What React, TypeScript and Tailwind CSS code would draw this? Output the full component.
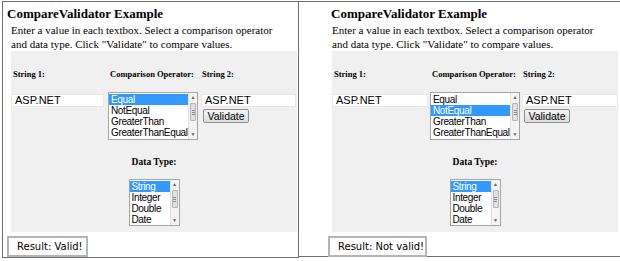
import React from "react";

const serif = { fontFamily: '"Liberation Serif", "Times New Roman", serif' };

function Scrollbar() {
  return (
    <div className="flex w-[9px] shrink-0 flex-col border-l border-[#e3e3e3] bg-[#f4f4f4]">
      <div className="flex h-[9px] items-center justify-center text-[5px] leading-none text-[#606060]">▲</div>
      <div className="mx-[1px] mt-[1px] flex h-[18px] flex-col items-center justify-center gap-[1px] rounded-[1px] border border-[#b5b5b5] bg-[#e0e0e0]">
        <div className="h-px w-[3px] bg-[#8a8a8a]" />
        <div className="h-px w-[3px] bg-[#8a8a8a]" />
        <div className="h-px w-[3px] bg-[#8a8a8a]" />
      </div>
      <div className="flex-1" />
      <div className="flex h-[9px] items-center justify-center text-[5px] leading-none text-[#606060]">▼</div>
    </div>
  );
}

function ListBox({ items, selected, w, h }: { items: string[]; selected: number; w: number; h: number }) {
  return (
    <div
      className="flex shrink-0 overflow-hidden border border-[#a5a5a5] bg-white"
      style={{ width: w, height: h, fontFamily: '"Liberation Sans", Arial, sans-serif' }}
    >
      <div className="min-w-0 flex-1 overflow-hidden pt-px">
        {items.map((it, i) => (
          <div
            key={it}
            className={
              "h-[11px] whitespace-nowrap pl-[2px] text-[10px] leading-[11px] tracking-[-0.35px] " +
              (i === selected ? "bg-[#3399ff] text-white" : "text-black")
            }
          >
            {it}
          </div>
        ))}
      </div>
      <Scrollbar />
    </div>
  );
}

function TextBox({ w }: { w: number }) {
  return (
    <div
      className="h-[13px] shrink-0 border border-[#e8e8e8] bg-white pl-[3px] text-[11px] leading-[11px] text-black"
      style={{ width: w, fontFamily: '"Liberation Sans", Arial, sans-serif' }}
    >
      ASP.NET
    </div>
  );
}

type PanelProps = {
  result: string;
  opSelected: number;
  c1: number;
  g1: number;
  c2: number;
  g2: number;
  c3: number;
  resultW: number;
  titlePad: number;
};

function Panel({ result, opSelected, c1, g1, c2, g2, c3, resultW, titlePad }: PanelProps) {
  return (
    <div className="flex flex-col">
      <div className="pt-[4px] text-[13px] font-bold leading-[15px] text-black" style={{ ...serif, paddingLeft: titlePad }}>
        CompareValidator Example
      </div>
      <div className="mt-[2px] pl-[4px] text-[11px] leading-[14px] text-black" style={serif}>
        Enter a value in each textbox. Select a comparison operator
        <br />
        and data type. Click "Validate" to compare values.
      </div>
      <div className="ml-[4px] flex h-[181px] w-[286px] flex-col bg-[#f0f0f0]">
        <div className="flex pt-[18px] text-[8.5px] font-bold leading-[10px] text-black" style={serif}>
          <div className="pl-[2px]" style={{ width: c1 + g1 }}>String 1:</div>
          <div className="pl-[2px]" style={{ width: c2 + g2 }}>Comparison Operator:</div>
          <div className="pl-[1px]">String 2:</div>
        </div>
        <div className="mt-[13px] flex items-start">
          <div className="pt-[2px]">
            <TextBox w={c1} />
          </div>
          <div style={{ width: g1 }} />
          <ListBox
            items={["Equal", "NotEqual", "GreaterThan", "GreaterThanEqual"]}
            selected={opSelected}
            w={c2}
            h={48}
          />
          <div style={{ width: g2 }} />
          <div className="flex flex-col pt-[2px]">
            <TextBox w={c3} />
            <div
              className="ml-[2px] mt-[2px] flex h-[14px] w-[46px] items-center justify-center rounded-[2px] border border-[#8f8f8f] bg-gradient-to-b from-[#f6f6f6] to-[#dcdcdc] text-[10.5px] leading-none text-black"
              style={{ fontFamily: '"Liberation Sans", Arial, sans-serif' }}
            >
              Validate
            </div>
          </div>
        </div>
        <div className="mt-[16px] text-center text-[9.5px] font-bold leading-[12px] text-black" style={serif}>
          Data Type:
        </div>
        <div className="mt-[11px] flex justify-center">
          <ListBox items={["String", "Integer", "Double", "Date"]} selected={0} w={51} h={47} />
        </div>
      </div>
      <div
        className="mt-[4px] flex h-[21px] items-center border-2 border-[#b4b4b4] bg-white pl-[8px] text-[10px] text-black"
        style={{ width: resultW, fontFamily: '"DejaVu Sans", Verdana, sans-serif' }}
      >
        {result}
      </div>
    </div>
  );
}

export default function App() {
  return (
    <div className="flex h-[261px] w-[620px] overflow-hidden bg-white">
      <div className="ml-[2px] mt-[1px] h-[257px] w-[297px] shrink-0 border border-[#6f6f6f] pl-[4px]">
        <Panel result="Result: Valid!" opSelected={0} c1={93} g1={4} c2={90} g2={3} c3={95} resultW={81} titlePad={0} />
      </div>
      <div className="mt-[1px] h-[256px] flex-1 border-b border-t border-[#6f6f6f] pl-[29px]">
        <Panel result="Result: Not valid!" opSelected={1} c1={96} g1={2} c2={90} g2={2} c3={96} resultW={99} titlePad={3} />
      </div>
    </div>
  );
}
